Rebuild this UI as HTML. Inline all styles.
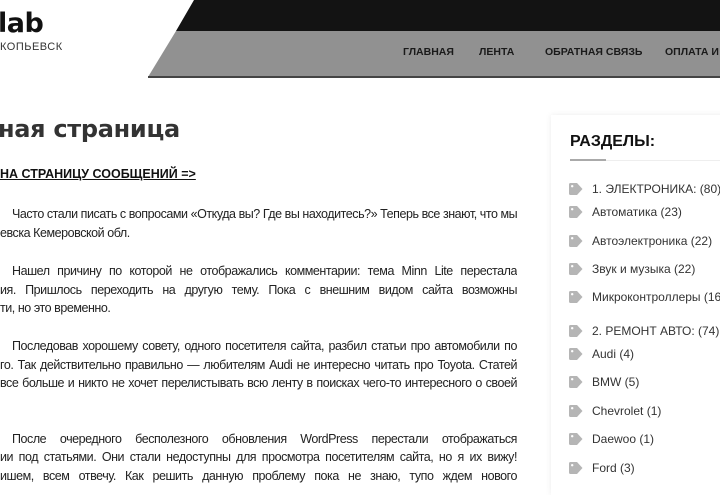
<!DOCTYPE html>
<html><head><meta charset="utf-8"><style>
*{margin:0;padding:0;box-sizing:border-box}
body{width:720px;height:480px;overflow:hidden;background:#fff;font-family:"Liberation Sans",sans-serif;position:relative;color:#222}
.a{position:absolute;white-space:nowrap}
.nav{font-family:"Liberation Sans",sans-serif;font-weight:bold;font-size:10.5px;color:#1a1a1a;top:46px}
.l{position:absolute;left:0;width:517px;font-size:12.5px;letter-spacing:-0.45px;text-align:justify;text-align-last:justify;white-space:nowrap;overflow:hidden;line-height:16px;color:#222}
.l.f{left:12px;width:505px}
.l.s{text-align-last:left}
.si{position:absolute;left:592px;font-size:12px;color:#333;white-space:nowrap}
.ic{position:absolute;left:569px;width:14px;height:12px}
</style></head><body>
<svg class="a" style="left:0;top:0" width="720" height="80">
<polygon points="194,0 720,0 720,31 176,31" fill="#131313"/>
<polygon points="176,31 720,31 720,77 148,77" fill="#919191"/>
<rect x="148" y="76" width="572" height="2" fill="#444"/>
</svg>
<div class="a" style="left:-2px;top:8px;font-size:27px;font-weight:bold;color:#111;font-family:'DejaVu Sans','Liberation Sans',sans-serif;letter-spacing:-0.5px">lab</div>
<div class="a" style="left:0;top:41px;font-size:11px;color:#333;letter-spacing:0.5px">КОПЬЕВСК</div>
<div class="a nav" style="left:403px">ГЛАВНАЯ</div>
<div class="a nav" style="left:479px">ЛЕНТА</div>
<div class="a nav" style="left:545px">ОБРАТНАЯ СВЯЗЬ</div>
<div class="a nav" style="left:665px">ОПЛАТА И</div>

<div class="a" style="left:-2px;top:115px;font-size:24px;font-weight:bold;color:#333;font-family:'DejaVu Sans','Liberation Sans',sans-serif;letter-spacing:-0.3px">ная страница</div>
<div class="a" style="left:0;top:167px;font-size:12.5px;font-weight:bold;text-decoration:underline;color:#111">НА СТРАНИЦУ СООБЩЕНИЙ =&gt;</div>

<div class="l f" style="top:206px">Часто стали писать с вопросами «Откуда вы? Где вы находитесь?» Теперь все знают, что мы</div>
<div class="l s" style="top:225px">евска Кемеровской обл.</div>
<div class="l f" style="top:263px">Нашел причину по которой не отображались комментарии: тема Minn Lite перестала</div>
<div class="l" style="top:282px">ия. Пришлось переходить на другую тему. Пока с внешним видом сайта возможны</div>
<div class="l s" style="top:300px">ти, но это временно.</div>
<div class="l f" style="top:338px">Последовав хорошему совету, одного посетителя сайта, разбил статьи про автомобили по</div>
<div class="l" style="top:357px">го. Так действительно правильно — любителям Audi не интересно читать про Toyota. Статей</div>
<div class="l" style="top:375px">все больше и никто не хочет перелистывать всю ленту в поисках чего-то интересного о своей</div>
<div class="l f" style="top:431px">После очередного бесполезного обновления WordPress перестали отображаться</div>
<div class="l" style="top:449px">ии под статьями. Они стали недоступны для просмотра посетителям сайта, но я их вижу!</div>
<div class="l" style="top:468px">ишем, всем отвечу. Как решить данную проблему пока не знаю, тупо ждем нового</div>

<div class="a" style="left:551px;top:115px;width:180px;height:380px;background:#fff;box-shadow:0 0 6px rgba(0,0,0,0.08)"></div>
<div class="a" style="left:570px;top:133px;font-size:16px;font-weight:bold;color:#111">РАЗДЕЛЫ:</div>
<div class="a" style="left:570px;top:160px;width:150px;height:1px;background:#eee"></div>
<div class="a" style="left:570px;top:159px;width:36px;height:2px;background:#aaa"></div>

<svg width="0" height="0" style="position:absolute"><defs><symbol id="t" viewBox="0 0 14 12"><path d="M0 1.5Q0 0 1.5 0H8L13.5 6 8 12 1.5 12Q0 12 0 10.5Z" fill="#b5b5b5"/><circle cx="3.2" cy="3.2" r="1.2" fill="#fff"/></symbol></defs></svg>

<svg class="ic" style="top:183px"><use href="#t"/></svg><div class="si" style="top:182px">1. ЭЛЕКТРОНИКА: (80)</div>
<svg class="ic" style="top:206px"><use href="#t"/></svg><div class="si" style="top:205px">Автоматика (23)</div>
<svg class="ic" style="top:235px"><use href="#t"/></svg><div class="si" style="top:234px">Автоэлектроника (22)</div>
<svg class="ic" style="top:263px"><use href="#t"/></svg><div class="si" style="top:262px">Звук и музыка (22)</div>
<svg class="ic" style="top:291px"><use href="#t"/></svg><div class="si" style="top:290px">Микроконтроллеры (16)</div>
<svg class="ic" style="top:325px"><use href="#t"/></svg><div class="si" style="top:324px">2. РЕМОНТ АВТО: (74)</div>
<svg class="ic" style="top:348px"><use href="#t"/></svg><div class="si" style="top:347px">Audi (4)</div>
<svg class="ic" style="top:376px"><use href="#t"/></svg><div class="si" style="top:375px">BMW (5)</div>
<svg class="ic" style="top:405px"><use href="#t"/></svg><div class="si" style="top:404px">Chevrolet (1)</div>
<svg class="ic" style="top:433px"><use href="#t"/></svg><div class="si" style="top:432px">Daewoo (1)</div>
<svg class="ic" style="top:462px"><use href="#t"/></svg><div class="si" style="top:461px">Ford (3)</div>
</body></html>
